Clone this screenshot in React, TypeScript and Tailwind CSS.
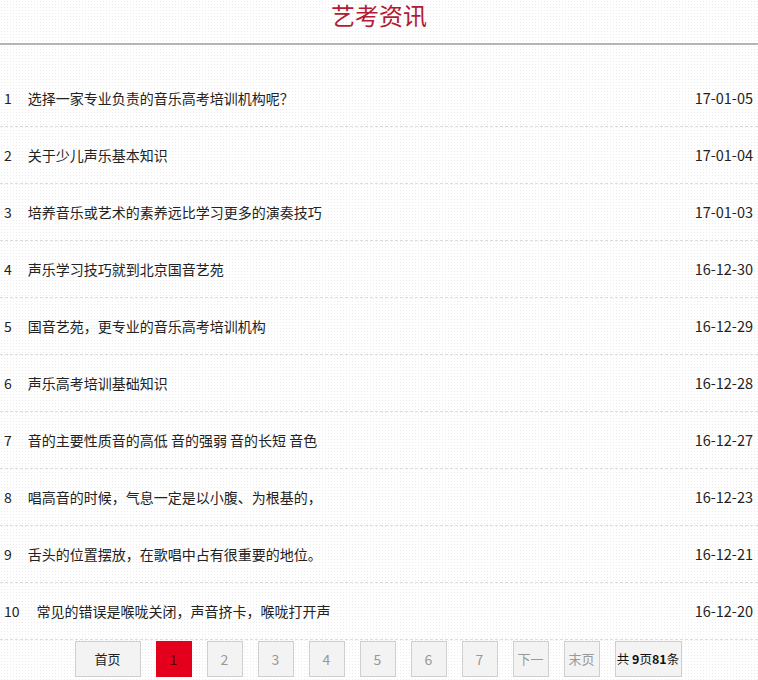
import React from "react";

const items: [string, string][] = [
  ["选择一家专业负责的音乐高考培训机构呢？", "17-01-05"],
  ["关于少儿声乐基本知识", "17-01-04"],
  ["培养音乐或艺术的素养远比学习更多的演奏技巧", "17-01-03"],
  ["声乐学习技巧就到北京国音艺苑", "16-12-30"],
  ["国音艺苑，更专业的音乐高考培训机构", "16-12-29"],
  ["声乐高考培训基础知识", "16-12-28"],
  ["音的主要性质音的高低 音的强弱 音的长短 音色", "16-12-27"],
  ["唱高音的时候，气息一定是以小腹、为根基的，", "16-12-23"],
  ["舌头的位置摆放，在歌唱中占有很重要的地位。", "16-12-21"],
  ["常见的错误是喉咙关闭，声音挤卡，喉咙打开声", "16-12-20"],
];

export default function App() {
  return (
    <div
      className="min-h-[680px] w-full bg-white bg-[radial-gradient(circle,#ededed_0.8px,transparent_1px)] bg-[length:3px_3px] text-[#222]"
      style={{ fontFamily: '"Noto Sans CJK SC", "Liberation Sans", sans-serif' }}
    >
      <div className="h-[43px] flex justify-center items-start pt-[1px]">
        <h1 className="text-[24px] leading-[28px] text-[#b31a33] font-normal">艺考资讯</h1>
      </div>
      <div className="h-[2px] bg-[#b5b5b5]" />
      <ul className="mt-[25px]">
        {items.map(([t, d], i) => (
          <li
            key={i}
            className="h-[57px] flex items-center justify-between border-b border-dashed border-[#dcdcdc] pl-[4px] pr-[5px] text-[14px]"
          >
            <div className="flex items-center">
              <span className="mr-[16px]">{i + 1}</span>
              <span className={i === 9 ? "ml-[1px]" : ""}>{t}</span>
            </div>
            <span className="text-[14.5px]">{d}</span>
          </li>
        ))}
      </ul>
      <div className="flex justify-center gap-[15px] pt-[1px] pr-[2px] text-[13px]">
        <span className="w-[66px] h-[36px] flex items-center justify-center border border-[#cfcfcf] bg-[#f3f3f3] text-[#222]">首页</span>
        <span className="w-[36px] h-[36px] flex items-center justify-center border border-[#e0001b] bg-[#e4001c] text-[#5a0a0a] text-[14px]">1</span>
        {["2", "3", "4", "5", "6", "7"].map((n) => (
          <span key={n} className="w-[36px] h-[36px] flex items-center justify-center border border-[#cfcfcf] bg-[#f3f3f3] text-[#999] text-[14px]">{n}</span>
        ))}
        <span className="w-[36px] h-[36px] flex items-center justify-center border border-[#cfcfcf] bg-[#f3f3f3] text-[#999]">下一</span>
        <span className="w-[36px] h-[36px] flex items-center justify-center border border-[#cfcfcf] bg-[#f3f3f3] text-[#999]">末页</span>
        <span className="w-[67px] h-[36px] flex items-center justify-center border border-[#cfcfcf] bg-[#f3f3f3] text-[#111] text-[12.5px]">
          共&nbsp;<b>9</b>页<b>81</b>条
        </span>
      </div>
    </div>
  );
}
